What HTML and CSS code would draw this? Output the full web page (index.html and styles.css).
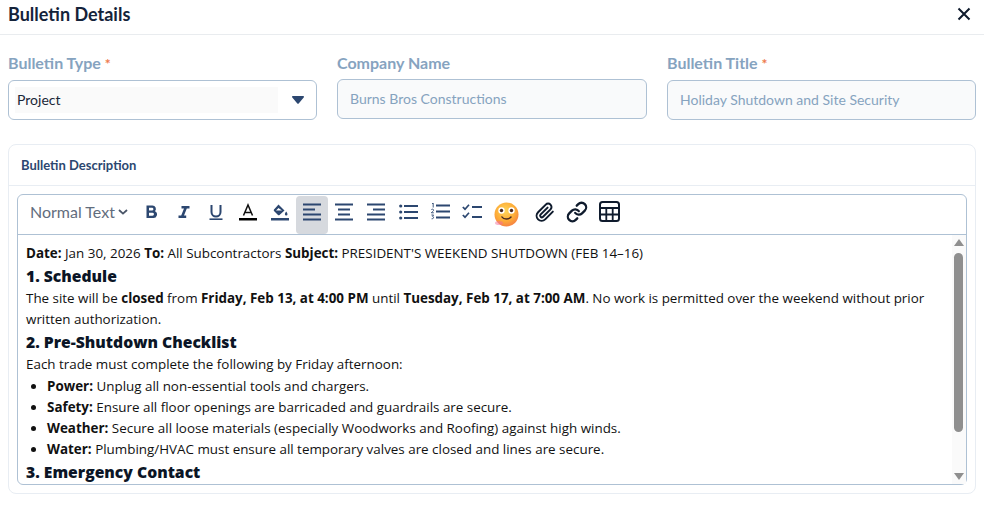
FILE: index.html
```html
<!DOCTYPE html>
<html lang="en">
<head>
    <meta charset="UTF-8">
    <meta name="viewport" content="width=device-width, initial-scale=1.0">
    <title>Bulletin Details</title>
    <link rel="stylesheet" href="styles.css">
</head>
<body>

<header class="modal-header">
    <h1>Bulletin Details</h1>
    <button class="close-btn" aria-label="Close">
        <svg width="14" height="14" viewBox="0 0 14 14"><path d="M1.5 1.5l11 11M12.5 1.5l-11 11" stroke="#0f1b2d" stroke-width="2" fill="none"/></svg>
    </button>
</header>

<!-- Top fields -->
<div class="fields">
    <div class="field">
        <label>Bulletin Type <span class="req">*</span></label>
        <div class="input select">
            <span class="select-value">Project</span>
            <svg class="select-arrow" width="12" height="8" viewBox="0 0 12 8"><path d="M1 0h10c.9 0 1.3 1 .7 1.6L6.7 7.4c-.4.4-1 .4-1.4 0L.3 1.6C-.3 1 .1 0 1 0z" fill="#2c4770"/></svg>
        </div>
    </div>
    <div class="field">
        <label>Company Name</label>
        <div class="input disabled">Burns Bros Constructions</div>
    </div>
    <div class="field">
        <label>Bulletin Title <span class="req">*</span></label>
        <div class="input disabled">Holiday Shutdown and Site Security</div>
    </div>
</div>

<!-- Description card -->
<section class="card">
    <div class="card-title">Bulletin Description</div>
    <div class="editor">
        <div class="toolbar">
            <div class="format">Normal Text
                <svg width="10" height="6" viewBox="0 0 10 6"><path d="M1 1l4 3.6L9 1" stroke="#4a5568" stroke-width="1.8" fill="none"/></svg>
            </div>
            <button class="tool tool-b"><svg width="16" height="16" viewBox="0 0 16 16"><path d="M2.500 1.500h6a3.400 3.400 0 0 1 2.500 5.700 3.600 3.600 0 0 1-2 6.800H2.500zM5 3.800v2.800h3a1.400 1.400 0 0 0 0-2.800zM5 8.800v2.900h3.500a1.450 1.450 0 0 0 0-2.900z" fill="#2c4770" fill-rule="evenodd"/></svg></button>
            <button class="tool tool-i"><svg width="16" height="16" viewBox="0 0 16 16"><path d="M5.500 2h8v2.400h-2.700L8 11.600h2.200V14H2.500v-2.400h2.700l2.800-7.200H5.500z" fill="#2c4770"/></svg></button>
            <button class="tool tool-u"><svg width="18" height="18" viewBox="0 0 18 18"><path d="M4.500 2v7a4.500 4.500 0 0 0 9 0V2" stroke="#2c4770" stroke-width="2" fill="none"/><path d="M2.500 16.200h13" stroke="#2c4770" stroke-width="1.600"/></svg></button>
            <button class="tool tool-a"><svg width="18" height="18" viewBox="0 0 18 18"><path d="M4.500 12.500L9 2l4.500 10.500M6 9.500h6" stroke="#111" stroke-width="1.500" fill="none"/><path d="M0 15h18v2.500H0z" fill="#000"/></svg></button>
            <button class="tool tool-fill"><svg width="18" height="18" viewBox="0 0 18 18"><path d="M7.500 1.500l6 6-5 4.500c-.5.400-1 .400-1.500 0L3 8c-.400-.500-.400-1 0-1.500zM7.500 5L5 7.500h6z" fill="#2c4770" fill-rule="evenodd"/><path d="M15.200 8.500c.8 1.300 1.300 2 1.300 2.700a1.300 1.300 0 0 1-2.600 0c0-.7.500-1.400 1.300-2.700z" fill="#2c4770"/><path d="M0 15h18v2.500H0z" fill="#2c4770"/></svg></button>
            <button class="tool tool-active"><svg width="18" height="18" viewBox="0 0 18 18"><path d="M0 1.500h18M0 6.500h12M0 11.500h18M0 16.500h18" stroke="#2c4770" stroke-width="1.800"/></svg></button>
            <button class="tool"><svg width="18" height="18" viewBox="0 0 18 18"><path d="M0 1.500h18M3 6.500h12M3 11.500h12M0 16.500h18" stroke="#2c4770" stroke-width="1.800"/></svg></button>
            <button class="tool"><svg width="18" height="18" viewBox="0 0 18 18"><path d="M0 1.500h18M6 6.500h12M0 11.500h18M0 16.500h18" stroke="#2c4770" stroke-width="1.800"/></svg></button>
            <button class="tool"><svg width="19" height="16" viewBox="0 0 19 16"><circle cx="1.700" cy="2" r="1.600" fill="#2c4770"/><circle cx="1.700" cy="8" r="1.600" fill="#2c4770"/><circle cx="1.700" cy="14" r="1.600" fill="#2c4770"/><path d="M5 2h14M5 8h14M5 14h14" stroke="#2c4770" stroke-width="1.800"/></svg></button>
            <button class="tool"><svg width="19" height="17" viewBox="0 0 19 17"><path d="M5 2.500h14M5 8.500h14M5 14.500h14" stroke="#2c4770" stroke-width="1.800"/><path d="M1 .8L2.200 0v4.500M.3 6.700c.6-.9 2.400-.6 2.300.5 0 .9-1.600 1.500-2.300 2.600h2.500M.4 12h2.200l-1.100 1.300c1.500 0 1.500 3-.9 2.500" stroke="#2c4770" stroke-width=".9" fill="none"/></svg></button>
            <button class="tool"><svg width="20" height="16" viewBox="0 0 20 16"><path d="M.8 3l2.200 2.200L7 .8M.8 11l2.200 2.200L7 8.800" stroke="#2c4770" stroke-width="1.700" fill="none"/><path d="M10 3h10M10 13h10" stroke="#2c4770" stroke-width="1.800"/></svg></button>
            <span class="emoji">
                <svg width="25" height="25" viewBox="0 0 25 25">
                    <defs>
                        <radialGradient id="face" cx="45%" cy="35%" r="70%">
                            <stop offset="0" stop-color="#ffd65a"/>
                            <stop offset=".6" stop-color="#fdab37"/>
                            <stop offset="1" stop-color="#f47a45"/>
                        </radialGradient>
                    </defs>
                    <circle cx="12.500" cy="12.500" r="12" fill="url(#face)"/>
                    <circle cx="7.500" cy="8.500" r="3.200" fill="#fff"/>
                    <circle cx="17.500" cy="8.500" r="3.200" fill="#fff"/>
                    <circle cx="7.500" cy="8.500" r="1.700" fill="#4a2a20"/>
                    <circle cx="17.500" cy="8.500" r="1.700" fill="#4a2a20"/>
                    <path d="M8 15c1.500 2.600 7 2.600 9 0" stroke="#4a2a20" stroke-width="1.500" fill="none" stroke-linecap="round"/>
                    <ellipse cx="5" cy="21" rx="4" ry="2" fill="#f2709c" opacity=".5"/>
                </svg>
            </span>
            <button class="tool tool-clip"><svg width="20" height="20" viewBox="0 0 24 24"><path d="M21.400 11.600l-9.200 9.200a6 6 0 0 1-8.500-8.500l9.200-9.200a4 4 0 0 1 5.700 5.700l-9.200 9.200a2 2 0 0 1-2.800-2.800l8.500-8.500" stroke="#0f1b2d" stroke-width="2.400" fill="none" stroke-linecap="round"/></svg></button>
            <button class="tool"><svg width="22" height="22" viewBox="0 0 24 24"><path d="M10 13a5 5 0 0 0 7.500.5l3-3a5 5 0 0 0-7.100-7.100l-1.700 1.700M14 11a5 5 0 0 0-7.500-.5l-3 3a5 5 0 0 0 7.100 7.100l1.700-1.700" stroke="#0f1b2d" stroke-width="2.500" fill="none" stroke-linecap="round"/></svg></button>
            <button class="tool"><svg width="21" height="21" viewBox="0 0 21 21"><rect x="1" y="1" width="19" height="19" rx="2.500" fill="none" stroke="#0f1b2d" stroke-width="2"/><path d="M1 7h19M1 13.500h19M7.300 7v13M13.700 7v13" stroke="#0f1b2d" stroke-width="1.800"/></svg></button>
        </div>
        <div class="editor-body">
            <div class="content">
                <p><b>Date:</b> Jan 30, 2026 <b>To:</b> All Subcontractors <b>Subject:</b> PRESIDENT'S WEEKEND SHUTDOWN (FEB 14–16)</p>
                <h3>1. Schedule</h3>
                <p>The site will be <b>closed</b> from <b>Friday, Feb 13, at 4:00 PM</b> until <b>Tuesday, Feb 17, at 7:00 AM</b>. No work is permitted over the weekend without prior written authorization.</p>
                <h3>2. Pre-Shutdown Checklist</h3>
                <p>Each trade must complete the following by Friday afternoon:</p>
                <ul>
                    <li><b>Power:</b> Unplug all non-essential tools and chargers.</li>
                    <li><b>Safety:</b> Ensure all floor openings are barricaded and guardrails are secure.</li>
                    <li><b>Weather:</b> Secure all loose materials (especially Woodworks and Roofing) against high winds.</li>
                    <li><b>Water:</b> Plumbing/HVAC must ensure all temporary valves are closed and lines are secure.</li>
                </ul>
                <h3>3. Emergency Contact</h3>
            </div>
            <div class="scrollbar">
                <span class="arrow-up"></span>
                <span class="thumb"></span>
                <span class="arrow-down"></span>
            </div>
        </div>
    </div>
</section>

</body>
</html>
```

FILE: styles.css
```css
/* Reset default margin and padding */
body, h1, h3, p, ul {
    margin: 0;
    padding: 0;
}

body {
    font-family: Lato, Arial, sans-serif;
    background: #fff;
    color: #0f1b2d;
    width: 984px;
    height: 512px;
    overflow: hidden;
}

button {
    background: none;
    border: none;
    padding: 0;
}

/* Header */
.modal-header {
    height: 34px;
    border-bottom: 1px solid #e9ecef;
    padding: 0 13px 0 8px;
    display: flex;
    align-items: center;
    justify-content: space-between;
}

.modal-header h1 {
    font-size: 18px;
    font-weight: 700;
    line-height: 28px;
    padding-bottom: 6px;
    color: #14233a;
}

.close-btn {
    display: flex;
    padding-bottom: 6px;
}

/* Top fields */
.fields {
    display: grid;
    grid-template-columns: 309px 310px 309px;
    gap: 20px;
    padding: 19px 8px 0;
}

.field label {
    display: block;
    font-size: 16px;
    font-weight: 700;
    line-height: 18px;
    color: #86a3bf;
    margin-bottom: 7px;
}

.req {
    color: #ee7a4c;
    font-size: 14px;
}

.input {
    height: 40px;
    box-sizing: border-box;
    border: 1px solid #aec1d4;
    border-radius: 6px;
    display: flex;
    align-items: center;
    font-size: 14px;
    padding: 0 12px;
}

.input.disabled {
    background: #f9fafb;
    color: #86a3bf;
    padding-bottom: 2px;
}

.select {
    padding: 0 12px 0 6px;
    justify-content: space-between;
}

.select-value {
    width: 263px;
    height: 26px;
    line-height: 26px;
    padding-left: 2px;
    box-sizing: border-box;
    background: #fafafa;
    color: #1a2738;
}

/* Description card */
.card {
    margin: 24px 8px 0;
    height: 350px;
    box-sizing: border-box;
    border: 1px solid #e8edf3;
    border-radius: 8px;
    display: flex;
    flex-direction: column;
}

.card-title {
    height: 41px;
    box-sizing: border-box;
    border-bottom: 1px solid #e8edf3;
    padding-left: 12px;
    font-size: 13px;
    font-weight: 700;
    line-height: 40px;
    color: #2c4770;
}

.editor {
    margin: 8px 8px 0;
    height: 291px;
    box-sizing: border-box;
    border: 1px solid #aec1d4;
    border-radius: 6px;
    display: flex;
    flex-direction: column;
}

/* Toolbar */
.toolbar {
    height: 39px;
    flex: none;
    border-bottom: 1px solid #aec1d4;
    padding-left: 12px;
    display: flex;
    align-items: center;
}

.format {
    font-size: 16px;
    color: #626d7d;
    display: flex;
    align-items: center;
    gap: 3px;
    width: 107px;
    flex: none;
    white-space: nowrap;
    padding-bottom: 6px;
}

.tool {
    width: 32px;
    height: 38px;
    box-sizing: border-box;
    padding-bottom: 6px;
    display: flex;
    align-items: center;
    justify-content: center;
    flex: none;
}

.tool-b { margin-left: -1px; }

.tool-active {
    background: #d6d9de;
    border-radius: 4px;
}

.emoji {
    width: 36px;
    display: flex;
    justify-content: center;
}

.tool-clip { margin-left: 5px; }

/* Editor content */
.editor-body {
    flex: 1;
    min-height: 0;
    display: flex;
}

.content {
    flex: 1;
    overflow: hidden;
    padding: 8px 20px 0 8px;
    font-family: "Open Sans", "Noto Sans", sans-serif;
    font-size: 13.400px;
    line-height: 21px;
    color: #111;
}

.content h3 {
    font-size: 15.700px;
    font-weight: 800;
    line-height: 24px;
    color: #0b1526;
}

.content ul {
    padding-left: 21px;
    padding-top: 1px;
}

/* Fake scrollbar so the arrows match */
.scrollbar {
    width: 14px;
    box-sizing: border-box;
    padding-left: 2px;
    background: #fafafa;
    display: flex;
    flex-direction: column;
    align-items: flex-start;
}

.arrow-up, .arrow-down {
    width: 0;
    height: 0;
    border-left: 5px solid transparent;
    border-right: 5px solid transparent;
}

.arrow-up {
    border-bottom: 7px solid #8f8f8f;
    margin-top: 4px;
}

.arrow-down {
    border-top: 7px solid #8f8f8f;
    margin-top: 41px;
}

.thumb {
    width: 9px;
    height: 179px;
    margin-top: 7px;
    background: #8f8f8f;
    border-radius: 5px;
}
```
